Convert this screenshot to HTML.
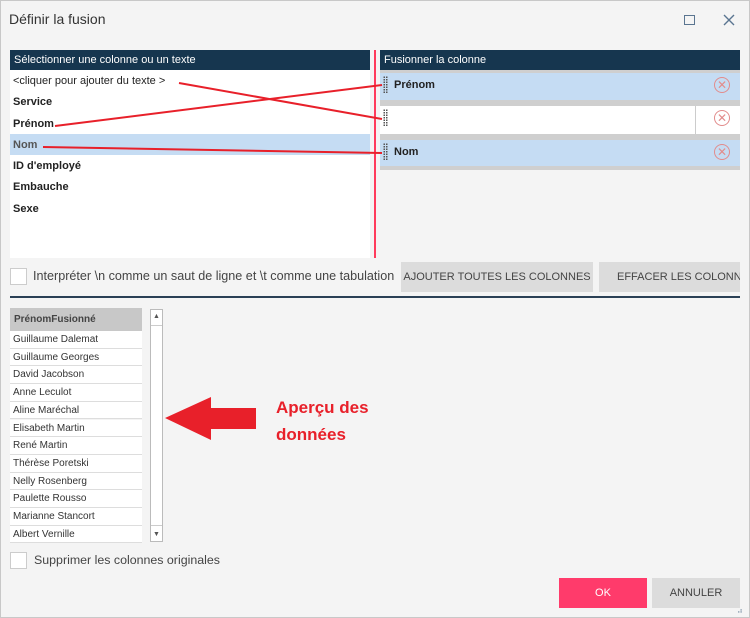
<!DOCTYPE html>
<html><head><meta charset="utf-8"><style>
*{box-sizing:border-box;margin:0;padding:0}
body{width:750px;height:618px;background:#f4f4f4;font-family:"Liberation Sans",sans-serif;position:relative;overflow:hidden}
.a{position:absolute}
.hdr{background:#16364f;color:#fff;font-size:11px;line-height:20px;padding-left:4px}
.li{position:absolute;left:3px;font-size:11px;font-weight:bold;color:#222}
.row{position:absolute;left:380px;width:360px;height:26px;background:#c5dcf3;border-top:3px solid #cfcfcf}
.grip{position:absolute;left:3px;top:3px;width:5px;height:18px;background:radial-gradient(circle,#555 0.8px,transparent 1px) 0 0/2.5px 2.5px}
.x{position:absolute;right:10px;top:4px;width:16px;height:16px;border:1px solid #e28c8c;border-radius:50%;color:#e28c8c;font-size:12px;line-height:14px;text-align:center}
.btn{position:absolute;background:#dcdcdc;font-size:11px;color:#444;text-align:center;line-height:30px;overflow:hidden;white-space:nowrap}
.cb{position:absolute;width:17px;height:17px;background:#fff;border:1px solid #ccc}
.g{position:absolute;left:10px;width:132px;height:17.7px;background:#fff;border-bottom:1px solid #ddd;font-size:10px;color:#333;padding-left:3px;line-height:17px}
</style></head><body>
<div class="a" style="left:0;top:0;width:750px;height:618px;border:1px solid #c8c8c8"></div>
<div class="a" style="left:9px;top:11px;font-size:14px;color:#333">Définir la fusion</div>
<div class="a" style="left:684px;top:15px;width:11px;height:10px;border:1.5px solid #5a7590"></div>
<svg class="a" style="left:723px;top:14px" width="12" height="12"><path d="M1 1L11 11M11 1L1 11" stroke="#5a7590" stroke-width="1.4"/></svg>

<div class="a hdr" style="left:10px;top:50px;width:360px;height:20px">Sélectionner une colonne ou un texte</div>
<div class="a" style="left:10px;top:70px;width:360px;height:188px;background:#fff">
<div class="a" style="left:0;top:64px;width:360px;height:21px;background:#c5dcf3"></div>
<div class="li" style="top:5px;font-weight:normal">&lt;cliquer pour ajouter du texte &gt;</div>
<div class="li" style="top:26px">Service</div>
<div class="li" style="top:48px">Prénom</div>
<div class="li" style="top:69px;color:#555">Nom</div>
<div class="li" style="top:90px">ID d'employé</div>
<div class="li" style="top:111px">Embauche</div>
<div class="li" style="top:133px">Sexe</div>
</div>
<div class="a" style="left:374px;top:50px;width:2px;height:208px;background:#ff3b5c"></div>

<div class="a hdr" style="left:380px;top:50px;width:360px;height:20px">Fusionner la colonne</div>
<div class="row" style="top:70px;height:30px"><div class="grip"></div><div class="a" style="left:14px;top:6px;font-size:11px;font-weight:bold;color:#222">Prénom</div><div class="x">✕</div></div>
<div class="row" style="top:100px;height:34px;background:#fff;border-top:6px solid #cfcfcf"><div class="grip"></div><div class="a" style="left:315px;top:0;width:1px;height:28px;background:#ccc"></div><div class="x">✕</div></div>
<div class="row" style="top:134px;height:32px;border-top:6px solid #cfcfcf"><div class="grip"></div><div class="a" style="left:14px;top:6px;font-size:11px;font-weight:bold;color:#222">Nom</div><div class="x">✕</div></div>
<div class="a" style="left:380px;top:166px;width:360px;height:4px;background:#cfcfcf"></div>

<svg class="a" style="left:0;top:0" width="750" height="300"><g stroke="#e8202a" stroke-width="2" fill="none">
<path d="M179 83 L382 119"/><path d="M55 126 L382 85"/><path d="M43 147 L382 153"/></g></svg>

<div class="cb" style="left:10px;top:268px"></div>
<div class="a" style="left:33px;top:269px;font-size:12.6px;color:#444">Interpréter \n comme un saut de ligne et \t comme une tabulation</div>
<div class="btn" style="left:401px;top:262px;width:192px">AJOUTER TOUTES LES COLONNES</div>
<div class="btn" style="left:599px;top:262px;width:141px;text-align:left;padding-left:18px">EFFACER LES COLONNES</div>
<div class="a" style="left:10px;top:296px;width:730px;height:2px;background:#2a4055"></div>

<div class="a" style="left:10px;top:308px;width:132px;height:23px;background:#c8c8c8;font-size:10px;font-weight:bold;color:#444;line-height:23px;padding-left:4px">PrénomFusionné</div>
<div class="g" style="top:331px">Guillaume Dalemat</div>
<div class="g" style="top:348.7px">Guillaume Georges</div>
<div class="g" style="top:366.4px">David Jacobson</div>
<div class="g" style="top:384.1px">Anne Leculot</div>
<div class="g" style="top:401.8px">Aline Maréchal</div>
<div class="g" style="top:419.5px">Elisabeth Martin</div>
<div class="g" style="top:437.2px">René Martin</div>
<div class="g" style="top:454.9px">Thérèse Poretski</div>
<div class="g" style="top:472.6px">Nelly Rosenberg</div>
<div class="g" style="top:490.3px">Paulette Rousso</div>
<div class="g" style="top:508px">Marianne Stancort</div>
<div class="g" style="top:525.7px">Albert Vernille</div>
<div class="a" style="left:150px;top:309px;width:13px;height:233px;background:#fff;border:1px solid #bbb">
<div class="a" style="left:0;top:15px;width:11px;height:1px;background:#ccc"></div>
<div class="a" style="left:0;bottom:15px;width:11px;height:1px;background:#ccc"></div>
<div class="a" style="left:2px;top:3px;font-size:7px;color:#555">▲</div>
<div class="a" style="left:2px;bottom:3px;font-size:7px;color:#555">▼</div></div>

<svg class="a" style="left:160px;top:390px" width="100" height="55"><polygon fill="#e8202a" points="5,28 51,7 51,18 96,18 96,39 51,39 51,50"/></svg>
<div class="a" style="left:276px;top:394px;font-size:17px;font-weight:bold;color:#e8202a;line-height:27px">Aperçu des<br>données</div>

<div class="cb" style="left:10px;top:552px"></div>
<div class="a" style="left:34px;top:553px;font-size:12.4px;color:#444">Supprimer les colonnes originales</div>
<div class="btn" style="left:559px;top:578px;width:88px;background:#ff3b6b;color:#fff">OK</div>
<div class="btn" style="left:652px;top:578px;width:88px">ANNULER</div>
<div class="a" style="left:737px;top:604px;font-size:8px;color:#5a7590">⣠</div>
</body></html>
